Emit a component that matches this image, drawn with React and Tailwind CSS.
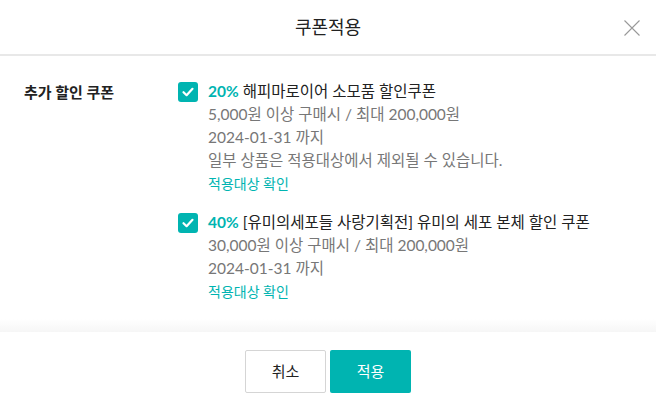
import React from "react";

const font = { fontFamily: 'Lato, "Noto Sans CJK KR", sans-serif' };

function Check() {
  return (
    <div className="mt-[1.5px] flex h-[20px] w-[20px] shrink-0 items-center justify-center rounded-[3px] bg-[#00b4b1]">
      <svg width="14" height="14" viewBox="0 0 14 14" fill="none">
        <path d="M2.5 7.2 L5.6 10.2 L11.5 3.8" stroke="white" strokeWidth="2.2" strokeLinecap="round" strokeLinejoin="round" />
      </svg>
    </div>
  );
}

function Coupon({ pct, title, lines }) {
  return (
    <div className="flex">
      <Check />
      <div className="ml-[10px] flex flex-col">
        <div className="text-[15.5px] leading-[23px] text-[#222]">
          <span className="font-bold text-[#00b4b1]">{pct}</span> {title}
        </div>
        {lines.map((l, i) => (
          <div key={i} className="text-[15.5px] leading-[23px] text-[#777]">{l}</div>
        ))}
        <div className="text-[14px] leading-[23px] text-[#00b4b1]">적용대상 확인</div>
      </div>
    </div>
  );
}

export default function App() {
  return (
    <div className="flex h-[406px] w-[656px] flex-col bg-white" style={font}>
      <div className="relative flex h-[56px] shrink-0 items-center justify-center border-b-2 border-[#e8e8e8]">
        <span className="text-[18px] text-[#222]">쿠폰적용</span>
        <svg className="absolute right-[16px] top-[20px]" width="16" height="16" viewBox="0 0 16 16">
          <path d="M0.5 0.5 L15.5 15.5 M15.5 0.5 L0.5 15.5" stroke="#999" strokeWidth="1.1" />
        </svg>
      </div>
      <div className="flex pt-[24px]">
        <div className="w-[178px] shrink-0 pl-[24px] text-[15px] font-bold leading-[25px] text-[#222]">추가 할인 쿠폰</div>
        <div className="flex flex-col gap-[16px]">
          <Coupon
            pct="20%"
            title="해피마로이어 소모품 할인쿠폰"
            lines={["5,000원 이상 구매시 / 최대 200,000원", "2024-01-31 까지", "일부 상품은 적용대상에서 제외될 수 있습니다."]}
          />
          <Coupon
            pct="40%"
            title="[유미의세포들 사랑기획전] 유미의 세포 본체 할인 쿠폰"
            lines={["30,000원 이상 구매시 / 최대 200,000원", "2024-01-31 까지"]}
          />
        </div>
      </div>
      <div className="flex-1" />
      <div className="h-[13px] shrink-0 bg-gradient-to-b from-white to-[#f6f6f6]" />
      <div className="flex shrink-0 justify-center gap-[4px] pb-[13px] pt-[18px]">
        <button className="h-[43px] w-[81px] rounded-[2px] border border-[#d5d5d5] bg-white text-[15px] text-[#222]">취소</button>
        <button className="h-[43px] w-[81px] rounded-[2px] bg-[#00b4b1] text-[15px] text-white">적용</button>
      </div>
    </div>
  );
}
